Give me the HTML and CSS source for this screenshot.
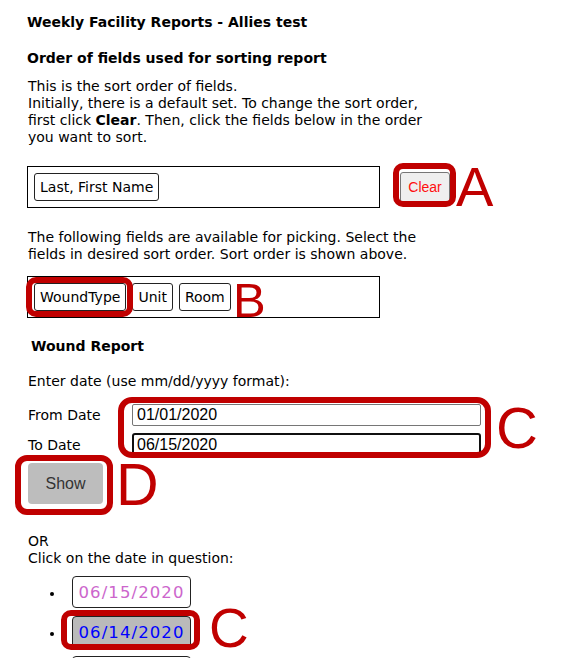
FILE: index.html
```html
<!DOCTYPE html>
<html>
<head>
<meta charset="utf-8">
<link rel="stylesheet" href="styles.css">
</head>
<body>
<div class="page">
  <div class="title">Weekly Facility Reports - Allies test</div>
  <div class="heading">Order of fields used for sorting report</div>
  <p class="intro">This is the sort order of fields.<br>Initially, there is a default set. To change the sort order,<br>first click <b>Clear</b>. Then, click the fields below in the order<br>you want to sort.</p>
  <div class="sort-row">
    <div class="field-box">
      <button class="field-btn">Last, First Name</button>
    </div>
    <button class="clear-btn">Clear</button>
  </div>
  <p class="pick-text">The following fields are available for picking. Select the<br>fields in desired sort order. Sort order is shown above.</p>
  <div class="field-box avail">
    <button class="field-btn">WoundType</button>
    <button class="field-btn">Unit</button>
    <button class="field-btn">Room</button>
  </div>
  <div class="sub-heading">Wound Report</div>
  <p class="enter">Enter date (use mm/dd/yyyy format):</p>
  <div class="date-row">
    <label class="date-label">From Date</label>
    <input class="date-input" type="text" value="01/01/2020">
  </div>
  <div class="date-row second">
    <label class="date-label">To Date</label>
    <input class="date-input focused" type="text" value="06/15/2020">
  </div>
  <button class="show-btn">Show</button>
  <p class="or-text">OR<br>Click on the date in question:</p>
  <ul class="date-list">
    <li><button class="date-btn visited">06/15/2020</button></li>
    <li><button class="date-btn current">06/14/2020</button></li>
    <li><button class="date-btn">06/13/2020</button></li>
  </ul>

  <div class="mark box-a"></div>
  <div class="letter let-a">A</div>
  <div class="mark box-b"></div>
  <div class="letter let-b">B</div>
  <div class="mark box-c1"></div>
  <div class="letter let-c1">C</div>
  <div class="mark box-d"></div>
  <div class="letter let-d">D</div>
  <div class="mark box-c2"></div>
  <div class="letter let-c2">C</div>
</div>
</body>
</html>
```

FILE: styles.css
```css
html, body {
  margin: 0;
  padding: 0;
  background: #fff;
}
body {
  font-family: "DejaVu Sans", Verdana, sans-serif;
  font-size: 14px;
  line-height: 17px;
  color: #000;
}
.page {
  position: relative;
  padding: 14px 0 0 27px;
  height: 644px;
  overflow: hidden;
}
.title, .heading, .sub-heading {
  font-weight: bold;
  margin: 0;
}
.heading {
  margin-top: 19px;
}
.intro {
  margin: 11px 0 0 1px;
}
.sort-row {
  display: flex;
  align-items: center;
  margin-top: 20px;
}
.field-box {
  box-sizing: border-box;
  width: 353px;
  height: 42px;
  border: 1px solid #000;
  padding: 6px 6px 7px;
  display: flex;
  align-items: center;
  gap: 6px;
}
.field-btn {
  font-family: "DejaVu Sans", Verdana, sans-serif;
  font-size: 14px;
  height: 28px;
  padding: 0 5px;
  background: #fff;
  color: #000;
  border: 1px solid #222;
  border-radius: 3px;
}
.clear-btn {
  margin-left: 20px;
  width: 50px;
  height: 31px;
  font-family: "Liberation Sans", Arial, sans-serif;
  font-size: 14px;
  color: #ff1010;
  background: #efefef;
  border: 1px solid #767676;
  border-radius: 3px;
  padding: 0;
}
.pick-text {
  margin: 21px 0 0 1px;
}
.avail {
  margin-top: 13px;
}
.sub-heading {
  margin-top: 20px;
  padding-left: 4px;
}
.enter {
  margin: 18px 0 0 1px;
}
.date-row {
  display: flex;
  align-items: center;
  margin-top: 14px;
}
.date-row.second {
  margin-top: 7px;
}
.date-label {
  width: 104px;
  padding-left: 1px;
}
.date-input {
  box-sizing: border-box;
  width: 349px;
  height: 22px;
  font-family: "Liberation Sans", Arial, sans-serif;
  font-size: 16px;
  padding: 0 4px;
  border: 1px solid #767676;
  border-radius: 2px;
  color: #000;
  outline: none;
}
.date-input.focused {
  height: 24px;
  border: 2px solid #101010;
  border-radius: 3px;
  padding: 0 3px;
}
.show-btn {
  display: block;
  margin-top: 6px;
  margin-left: 1px;
  width: 75px;
  height: 41px;
  font-family: "Liberation Sans", Arial, sans-serif;
  font-size: 16px;
  color: #333;
  background: #bdbdbd;
  border: none;
  border-radius: 4px;
}
.or-text {
  margin: 29px 0 0 1px;
}
.date-list {
  margin: 9px 0 0;
  padding-left: 38px;
}
.date-list li {
  height: 40px;
}
.date-btn {
  margin-left: 7px;
  font-family: "DejaVu Sans", Verdana, sans-serif;
  font-size: 16.5px;
  letter-spacing: 1.1px;
  height: 32px;
  width: 119px;
  padding: 0;
  background: #fff;
  border: 1px solid #222;
  border-radius: 4px;
  color: #000;
}
.date-btn.visited {
  color: #cc66cc;
}
.date-btn.current {
  background: #bababa;
  color: #0000ff;
}

/* annotations */
.mark {
  position: absolute;
  box-sizing: border-box;
  border: 6px solid #c00000;
  border-radius: 10px;
}
.letter {
  position: absolute;
  font-family: "Liberation Sans", Arial, sans-serif;
  color: #c00000;
  line-height: 1;
}
.box-a { left: 393px; top: 163px; width: 63px; height: 44px; }
.let-a { left: 456px; top: 159px; font-size: 56px; }
.box-b { left: 26px; top: 277px; width: 107px; height: 40px; }
.let-b { left: 233px; top: 276px; font-size: 49px; }
.box-c1 { left: 118px; top: 397px; width: 373px; height: 61px; border-radius: 14px; }
.let-c1 { left: 496px; top: 399px; font-size: 58px; }
.box-d { left: 15px; top: 455px; width: 98px; height: 60px; border-radius: 12px; }
.let-d { left: 116px; top: 456px; font-size: 59px; }
.box-c2 { left: 61px; top: 610px; width: 139px; height: 40px; }
.let-c2 { left: 209px; top: 601px; font-size: 55px; }
```
